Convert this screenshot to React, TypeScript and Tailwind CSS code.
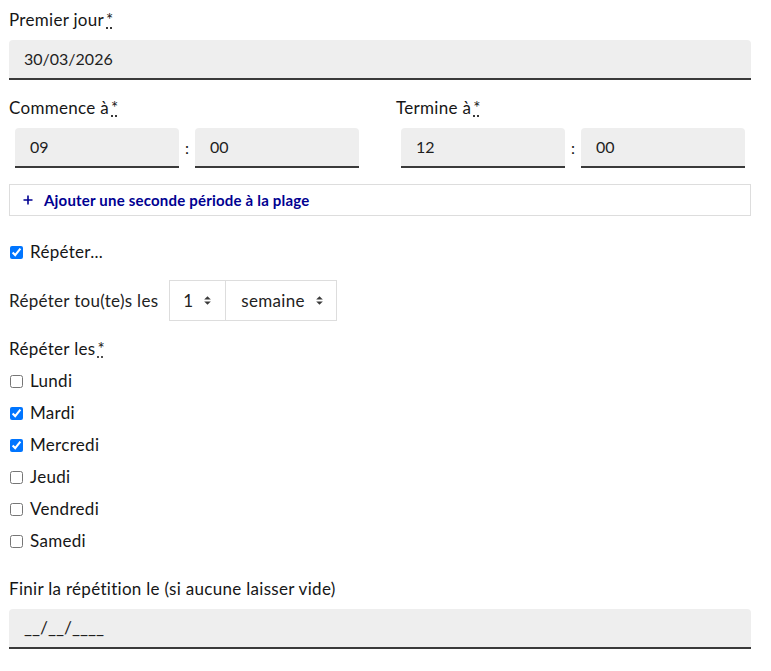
import React, { useState } from "react";

const font = { fontFamily: "Lato, 'Noto Sans', sans-serif" };

const Req: React.FC = () => (
  <abbr title="requis" className="ml-[2px] no-underline">
    <span className="underline decoration-dotted underline-offset-2">*</span>
  </abbr>
);

const Field: React.FC<{ value: string; className?: string }> = ({ value, className }) => (
  <div
    className={
      "h-10 bg-[#eeeeee] rounded-t-[4px] border-b-2 border-[#3a3a3a] flex items-center px-[15px] text-[#1e1e1e] " +
      (className || "text-[16px]")
    }
  >
    {value}
  </div>
);

const Caret: React.FC = () => (
  <svg width="7" height="9" viewBox="0 0 7 9" className="ml-[11px]">
    <path d="M3.5 0.3 L6.8 3.6 H0.2 Z" fill="#3a3a3a" />
    <path d="M3.5 8.7 L6.8 5.4 H0.2 Z" fill="#3a3a3a" />
  </svg>
);

const TimeRow: React.FC<{ h: string; m: string }> = ({ h, m }) => (
  <div className="flex items-center">
    <Field value={h} className="w-[164px] text-[16px]" />
    <span className="w-4 text-center text-[16px]">:</span>
    <Field value={m} className="w-[164px] text-[16px]" />
  </div>
);

const days = [
  { name: "Lundi", checked: false },
  { name: "Mardi", checked: true },
  { name: "Mercredi", checked: true },
  { name: "Jeudi", checked: false },
  { name: "Vendredi", checked: false },
  { name: "Samedi", checked: false },
];

const Check: React.FC<{ label: string; checked: boolean }> = ({ label, checked }) => {
  const [on, setOn] = useState(checked);
  return (
    <label className="flex items-center h-6 text-[17px] tracking-[0.3px] text-[#161616]">
      <input
        type="checkbox"
        checked={on}
        onChange={(e) => setOn(e.target.checked)}
        className="m-0 w-[13px] h-[13px] ml-[1px]"
      />
      <span className="ml-[7px]">{label}</span>
    </label>
  );
};

const Label: React.FC<{ children: React.ReactNode; className?: string }> = ({ children, className }) => (
  <div className={"h-6 leading-6 text-[17px] tracking-[0.3px] " + (className || "")}>{children}</div>
);

export default function App() {
  return (
    <div style={font} className="bg-white min-h-screen pt-2 pl-[9px] pr-5 text-[#161616]">
      <Label>
        Premier jour
        <Req />
      </Label>
      <Field value="30/03/2026" className="mt-2 text-[16px]" />

      <div className="grid grid-cols-2 gap-x-8 mt-4">
        <div>
          <Label>
            Commence à
            <Req />
          </Label>
          <div className="mt-2 pl-[6px]">
            <TimeRow h="09" m="00" />
          </div>
        </div>
        <div>
          <Label>
            Termine à
            <Req />
          </Label>
          <div className="mt-2 pl-[5px]">
            <TimeRow h="12" m="00" />
          </div>
        </div>
      </div>

      <button
        type="button"
        className="mt-4 w-full h-8 border border-[#dddddd] flex items-center pl-[13px] text-[#000091] text-[15px] tracking-[0.2px] font-bold"
      >
        <svg width="10" height="10" viewBox="0 0 10 10" className="mr-[11px]">
          <path d="M5 0.5 V9.5 M0.5 5 H9.5" stroke="#000091" strokeWidth="1.6" />
        </svg>
        Ajouter une seconde période à la plage
      </button>

      <div className="mt-6">
        <Check label="Répéter..." checked={true} />
      </div>

      <div className="mt-4 flex items-center text-[17px] tracking-[0.3px] text-[#222222]">
        <span>Répéter tou(te)s les</span>
        <div className="ml-[11px] flex">
          <div className="h-[41px] w-[57px] border border-[#dddddd] flex items-center justify-end pr-[14px]">
            <span>1</span>
            <Caret />
          </div>
          <div className="h-[41px] w-[111px] border border-l-0 border-[#dddddd] flex items-center pl-[15px]">
            <span>semaine</span>
            <Caret />
          </div>
        </div>
      </div>

      <Label className="mt-4">
        Répéter les
        <Req />
      </Label>
      <div className="mt-2 flex flex-col gap-2">
        {days.map((d) => (
          <Check key={d.name} label={d.name} checked={d.checked} />
        ))}
      </div>

      <Label className="mt-6">Finir la répétition le (si aucune laisser vide)</Label>
      <Field value="__/__/____" className="mt-2 text-[17.5px]" />
    </div>
  );
}
